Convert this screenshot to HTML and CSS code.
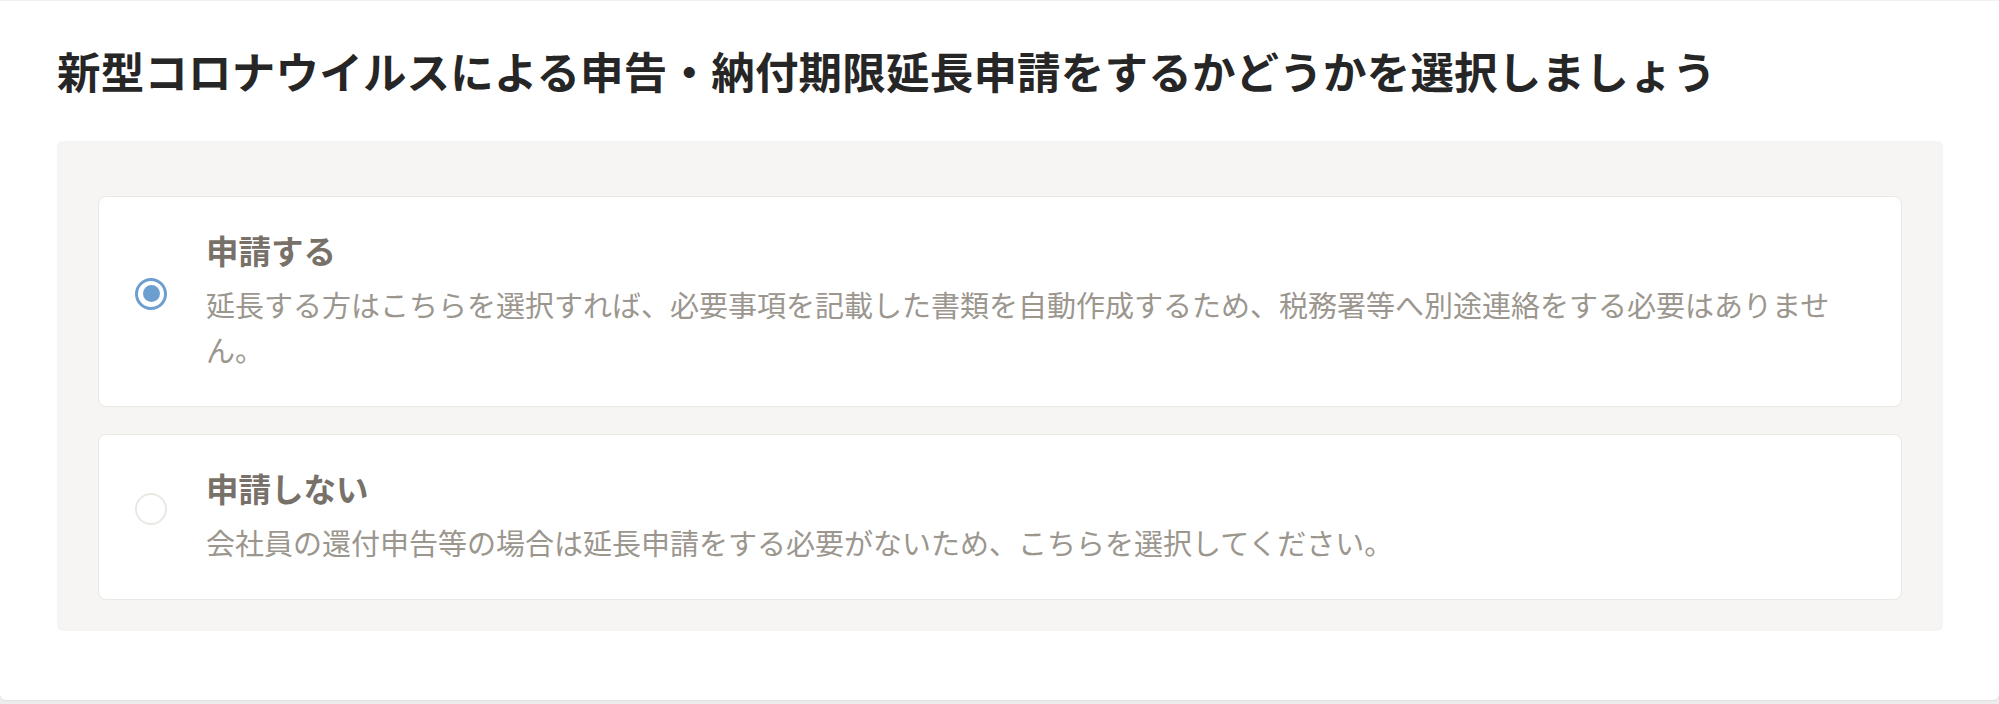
FILE: index.html
```html
<!DOCTYPE html>
<html lang="ja">
<head>
    <meta charset="UTF-8">
    <meta name="viewport" content="width=device-width, initial-scale=1.0">
    <title>申告・納付期限延長申請</title>
    <link rel="stylesheet" href="styles.css">
</head>
<body>
    <div class="sheet">
        <h1 class="sheet-title">新型コロナウイルスによる申告・納付期限延長申請をするかどうかを選択しましょう</h1>
        <form class="choice-box" onsubmit="return false;">
            <label class="choice">
                <input type="radio" name="extend" value="yes" checked>
                <span class="choice-mark"></span>
                <span class="choice-body">
                    <span class="choice-title">申請する</span>
                    <span class="choice-text">延長する方はこちらを選択すれば、必要事項を記載した書類を自動作成するため、税務署等へ別途連絡をする必要はありません。</span>
                </span>
            </label>
            <label class="choice">
                <input type="radio" name="extend" value="no">
                <span class="choice-mark"></span>
                <span class="choice-body">
                    <span class="choice-title">申請しない</span>
                    <span class="choice-text">会社員の還付申告等の場合は延長申請をする必要がないため、こちらを選択してください。</span>
                </span>
            </label>
        </form>
    </div>
</body>
</html>
```

FILE: styles.css
```css
* {
    margin: 0;
    padding: 0;
    box-sizing: border-box;
}
body {
    font-family: "Noto Sans CJK JP", "Noto Sans", sans-serif;
    background-color: #ededed;
    width: 1999px;
    height: 704px;
    overflow: hidden;
}
.sheet {
    background-color: #fff;
    height: 700px;
    border-top: 1px solid #f0f0f0;
    border-radius: 0 0 6px 6px;
    box-shadow: 0 1px 2px rgba(0,0,0,0.06);
    padding-top: 40px;
}
.sheet-title {
    font-size: 43.5px;
    letter-spacing: 0.2px;
    line-height: 60px;
    font-weight: bold;
    color: #262626;
    margin-left: 57px;
    margin-bottom: 40px;
    white-space: nowrap;
}
.choice-box {
    margin-left: 57px;
    width: 1886px;
    height: 490px;
    background-color: #f6f5f3;
    border-radius: 5px;
    padding: 55px 41px 30px;
    display: flex;
    flex-direction: column;
    gap: 27px;
}
.choice {
    display: flex;
    align-items: center;
    background-color: #fff;
    border: 1px solid #ebe8e3;
    border-radius: 8px;
    padding: 31px 53px 34px 36px;
    cursor: pointer;
}
.choice input {
    display: none;
}
.choice-mark {
    flex: none;
    width: 32px;
    height: 32px;
    border-radius: 50%;
    border: 2px solid #ebe8e3;
    margin-right: 39px;
    margin-bottom: 13px;
    display: flex;
    align-items: center;
    justify-content: center;
}
.choice input:checked + .choice-mark {
    border: 3px solid #6d9ed0;
}
.choice input:checked + .choice-mark::after {
    content: '';
    width: 17px;
    height: 17px;
    border-radius: 50%;
    background-color: #6d9ed0;
}
.choice-body {
    display: flex;
    flex-direction: column;
    gap: 10px;
    flex: 1;
}
.choice-title {
    font-size: 32.5px;
    line-height: 44px;
    font-weight: bold;
    color: #77716a;
}
.choice-text {
    font-size: 29px;
    line-height: 45px;
    color: #9b968e;
}
```
